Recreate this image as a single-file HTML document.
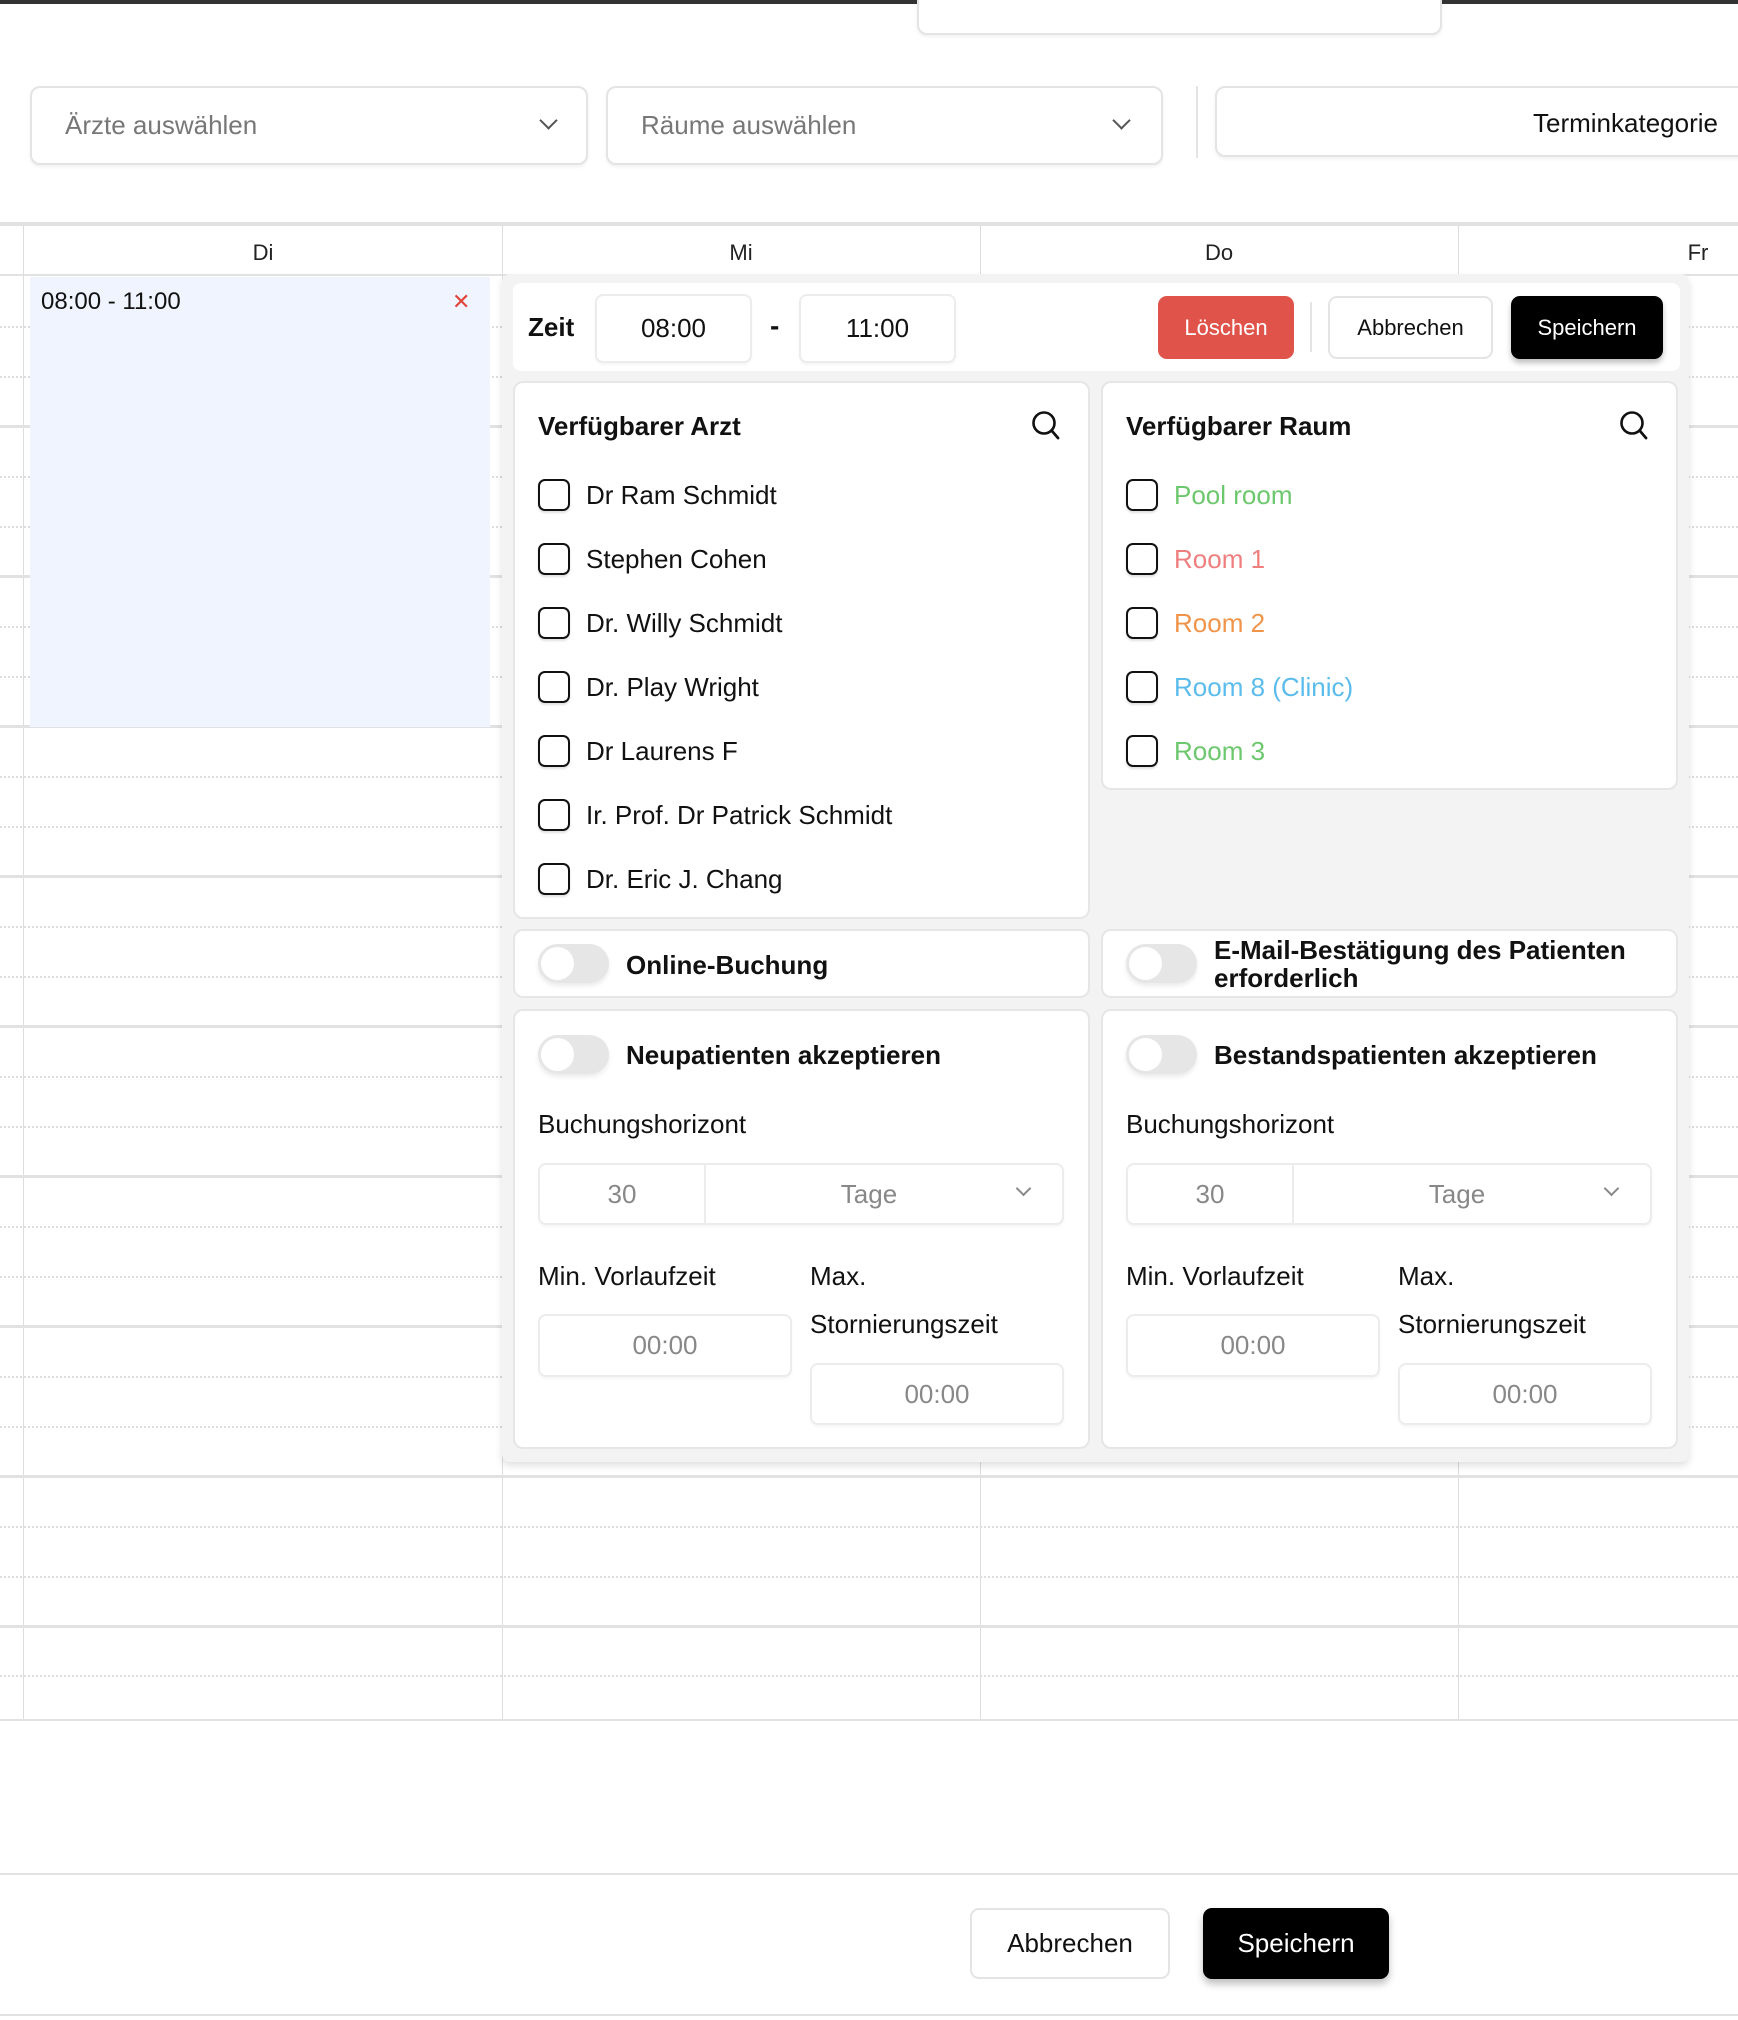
<!DOCTYPE html>
<html><head><meta charset="utf-8"><style>
*{box-sizing:border-box;margin:0;padding:0}
body{width:1738px;height:2020px;background:#fff;font-family:"Liberation Sans",sans-serif;color:#111;position:relative;overflow:hidden}
.a{position:absolute}
.box{position:absolute;background:#fff;border:2px solid #e4e4e4;border-radius:10px;box-shadow:0 2px 3px rgba(0,0,0,.06)}
.dd{font-size:26px;color:#777;padding-left:33px;display:flex;align-items:center}
.chev{position:absolute;width:13px;height:13px;border-right:2.5px solid #555;border-bottom:2.5px solid #555;transform:rotate(45deg)}
.vl{position:absolute;top:225px;width:1px;height:1495px;background:#ddd}
.hs{position:absolute;left:0;width:1738px;height:3px;background:#e2e2e2}
.hd{position:absolute;left:0;width:1738px;border-top:2px dotted #ddd}
.hdr{position:absolute;top:240px;font-size:22px;color:#222;transform:translateX(-50%)}
.panel{position:absolute;background:#fff;border:2px solid #e6e6e6;border-radius:10px}
.t{position:absolute;font-size:26px;font-weight:bold}
.cb{position:absolute;width:32px;height:32px;border:2.5px solid #111;border-radius:7px;box-shadow:0 2px 2px rgba(0,0,0,.12)}
.it{position:absolute;font-size:26px}
.tg{position:absolute;width:71px;height:39px;background:#e6e6e6;border-radius:20px;box-shadow:0 3px 5px rgba(0,0,0,.08)}
.tg::after{content:"";position:absolute;left:3px;top:3px;width:33px;height:33px;border-radius:50%;background:#fff}
.lbl{position:absolute;font-size:26px}
.inp{position:absolute;border:2px solid #ececec;border-radius:8px;background:#fff;font-size:26px;color:#888;display:flex;align-items:center;justify-content:center;box-shadow:0 2px 2px rgba(0,0,0,.04)}
.btn{position:absolute;border-radius:9px;display:flex;align-items:center;justify-content:center;font-size:22px}
</style></head><body>
<div class="a" style="left:0;top:0;width:1738px;height:4px;background:#333"></div>
<div class="box" style="left:917px;top:-10px;width:525px;height:45px"></div>

<div class="box dd" style="left:30px;top:86px;width:558px;height:79px">Ärzte auswählen<div class="chev" style="left:510px;top:26px"></div></div>
<div class="box dd" style="left:606px;top:86px;width:557px;height:79px">Räume auswählen<div class="chev" style="left:507px;top:26px"></div></div>
<div class="a" style="left:1196px;top:86px;width:2px;height:72px;background:#e4e4e4"></div>
<div class="box" style="left:1215px;top:86px;width:540px;height:71px"><span class="a" style="left:316px;top:20px;font-size:26px;color:#111">Terminkategorie</span></div>

<div class="hs" style="top:222px;height:4px"></div>
<div class="hs" style="top:274px;height:2px"></div>
<div class="vl" style="left:23px"></div><div class="vl" style="left:502px"></div><div class="vl" style="left:980px"></div><div class="vl" style="left:1458px"></div>
<div class="hdr" style="left:263px">Di</div><div class="hdr" style="left:741px">Mi</div><div class="hdr" style="left:1219px">Do</div><div class="hdr" style="left:1698px">Fr</div>
<div class="hd" style="top:326px"></div><div class="hd" style="top:376px"></div><div class="hs" style="top:425px"></div>
<div class="hd" style="top:476px"></div><div class="hd" style="top:526px"></div><div class="hs" style="top:575px"></div>
<div class="hd" style="top:626px"></div><div class="hd" style="top:676px"></div><div class="hs" style="top:725px"></div>
<div class="hd" style="top:776px"></div><div class="hd" style="top:826px"></div><div class="hs" style="top:875px"></div>
<div class="hd" style="top:926px"></div><div class="hd" style="top:976px"></div><div class="hs" style="top:1025px"></div>
<div class="hd" style="top:1076px"></div><div class="hd" style="top:1126px"></div><div class="hs" style="top:1175px"></div>
<div class="hd" style="top:1226px"></div><div class="hd" style="top:1276px"></div><div class="hs" style="top:1325px"></div>
<div class="hd" style="top:1376px"></div><div class="hd" style="top:1426px"></div><div class="hs" style="top:1475px"></div>
<div class="hd" style="top:1526px"></div><div class="hd" style="top:1576px"></div><div class="hs" style="top:1625px"></div>
<div class="hd" style="top:1675px"></div><div class="hs" style="top:1719px"></div>
<div class="a" style="left:0;top:1721px;width:1738px;height:150px;background:#fff"></div>
<div class="hs" style="top:1873px;height:2px"></div>
<div class="hs" style="top:2014px;height:2px"></div>

<div class="a" style="left:30px;top:277px;width:460px;height:450px;background:#eff4ff"></div>
<div class="a" style="left:41px;top:288px;font-size:24px">08:00 - 11:00</div>
<div class="a" style="left:452px;top:289px;font-size:22px;color:#e0453a">✕</div>

<div class="a" style="left:502px;top:274px;width:1187px;height:1188px;background:#f3f3f3;border-radius:8px;box-shadow:0 4px 8px rgba(0,0,0,.12)"></div>
<div class="a" style="left:513px;top:283px;width:1167px;height:88px;background:#fff;border-radius:8px"></div>
<div class="t" style="left:528px;top:312px">Zeit</div>
<div class="inp" style="left:595px;top:294px;width:157px;height:69px;color:#111">08:00</div>
<div class="a" style="left:770px;top:310px;font-size:28px;font-weight:bold">-</div>
<div class="inp" style="left:799px;top:294px;width:157px;height:69px;color:#111">11:00</div>
<div class="btn" style="left:1158px;top:296px;width:136px;height:63px;background:#e0534a;color:#fff">Löschen</div>
<div class="a" style="left:1310px;top:302px;width:2px;height:50px;background:#e4e4e4"></div>
<div class="btn" style="left:1328px;top:296px;width:165px;height:63px;border:2px solid #e4e4e4;background:#fff">Abbrechen</div>
<div class="btn" style="left:1511px;top:296px;width:152px;height:63px;background:#000;color:#fff;box-shadow:0 4px 6px rgba(0,0,0,.25)">Speichern</div>

<div class="panel" style="left:513px;top:381px;width:577px;height:538px"></div>
<div class="t" style="left:538px;top:411px">Verfügbarer Arzt</div>
<svg class="a" style="left:1031px;top:410px" width="30" height="32" viewBox="0 0 30 32"><circle cx="13" cy="13" r="10.5" fill="none" stroke="#111" stroke-width="2.6"/><path d="M21 21 L27 28" stroke="#111" stroke-width="2.8" stroke-linecap="round"/></svg>
<div class="cb" style="left:538px;top:479px"></div><div class="it" style="left:586px;top:480px">Dr Ram Schmidt</div>
<div class="cb" style="left:538px;top:543px"></div><div class="it" style="left:586px;top:544px">Stephen Cohen</div>
<div class="cb" style="left:538px;top:607px"></div><div class="it" style="left:586px;top:608px">Dr. Willy Schmidt</div>
<div class="cb" style="left:538px;top:671px"></div><div class="it" style="left:586px;top:672px">Dr. Play Wright</div>
<div class="cb" style="left:538px;top:735px"></div><div class="it" style="left:586px;top:736px">Dr Laurens F</div>
<div class="cb" style="left:538px;top:799px"></div><div class="it" style="left:586px;top:800px">Ir. Prof. Dr Patrick Schmidt</div>
<div class="cb" style="left:538px;top:863px"></div><div class="it" style="left:586px;top:864px">Dr. Eric J. Chang</div>

<div class="panel" style="left:1101px;top:381px;width:577px;height:409px"></div>
<div class="t" style="left:1126px;top:411px">Verfügbarer Raum</div>
<svg class="a" style="left:1619px;top:410px" width="30" height="32" viewBox="0 0 30 32"><circle cx="13" cy="13" r="10.5" fill="none" stroke="#111" stroke-width="2.6"/><path d="M21 21 L27 28" stroke="#111" stroke-width="2.8" stroke-linecap="round"/></svg>
<div class="cb" style="left:1126px;top:479px"></div><div class="it" style="left:1174px;top:480px;color:#6dc76d">Pool room</div>
<div class="cb" style="left:1126px;top:543px"></div><div class="it" style="left:1174px;top:544px;color:#ef7f7f">Room 1</div>
<div class="cb" style="left:1126px;top:607px"></div><div class="it" style="left:1174px;top:608px;color:#f0944a">Room 2</div>
<div class="cb" style="left:1126px;top:671px"></div><div class="it" style="left:1174px;top:672px;color:#5bbcec">Room 8 (Clinic)</div>
<div class="cb" style="left:1126px;top:735px"></div><div class="it" style="left:1174px;top:736px;color:#6dc76d">Room 3</div>

<div class="panel" style="left:513px;top:929px;width:577px;height:69px"></div>
<div class="tg" style="left:538px;top:944px"></div>
<div class="t" style="left:626px;top:950px">Online-Buchung</div>
<div class="panel" style="left:1101px;top:929px;width:577px;height:69px"></div>
<div class="tg" style="left:1126px;top:944px"></div>
<div class="t" style="left:1214px;top:936px;line-height:28px">E-Mail-Bestätigung des Patienten<br>erforderlich</div>

<div class="panel" style="left:513px;top:1009px;width:577px;height:440px"></div>
<div class="tg" style="left:538px;top:1035px"></div>
<div class="t" style="left:626px;top:1040px">Neupatienten akzeptieren</div>
<div class="lbl" style="left:538px;top:1109px">Buchungshorizont</div>
<div class="inp" style="left:538px;top:1163px;width:526px;height:62px;justify-content:flex-start">
 <div style="width:166px;height:100%;border-right:2px solid #ececec;display:flex;align-items:center;justify-content:center">30</div>
 <div style="flex:1;text-align:center;padding-right:30px">Tage</div><div class="chev" style="left:478px;top:18px;border-color:#888;width:11px;height:11px;border-width:2px"></div></div>
<div class="lbl" style="left:538px;top:1261px">Min. Vorlaufzeit</div>
<div class="lbl" style="left:810px;top:1261px">Max.</div>
<div class="lbl" style="left:810px;top:1309px">Stornierungszeit</div>
<div class="inp" style="left:538px;top:1314px;width:254px;height:63px">00:00</div>
<div class="inp" style="left:810px;top:1363px;width:254px;height:62px">00:00</div>

<div class="panel" style="left:1101px;top:1009px;width:577px;height:440px"></div>
<div class="tg" style="left:1126px;top:1035px"></div>
<div class="t" style="left:1214px;top:1040px">Bestandspatienten akzeptieren</div>
<div class="lbl" style="left:1126px;top:1109px">Buchungshorizont</div>
<div class="inp" style="left:1126px;top:1163px;width:526px;height:62px;justify-content:flex-start">
 <div style="width:166px;height:100%;border-right:2px solid #ececec;display:flex;align-items:center;justify-content:center">30</div>
 <div style="flex:1;text-align:center;padding-right:30px">Tage</div><div class="chev" style="left:478px;top:18px;border-color:#888;width:11px;height:11px;border-width:2px"></div></div>
<div class="lbl" style="left:1126px;top:1261px">Min. Vorlaufzeit</div>
<div class="lbl" style="left:1398px;top:1261px">Max.</div>
<div class="lbl" style="left:1398px;top:1309px">Stornierungszeit</div>
<div class="inp" style="left:1126px;top:1314px;width:254px;height:63px">00:00</div>
<div class="inp" style="left:1398px;top:1363px;width:254px;height:62px">00:00</div>

<div class="btn" style="left:970px;top:1908px;width:200px;height:71px;border:2px solid #e4e4e4;background:#fff;font-size:26px">Abbrechen</div>
<div class="btn" style="left:1203px;top:1908px;width:186px;height:71px;background:#000;color:#fff;font-size:26px;box-shadow:0 5px 8px rgba(0,0,0,.25)">Speichern</div>
</body></html>
